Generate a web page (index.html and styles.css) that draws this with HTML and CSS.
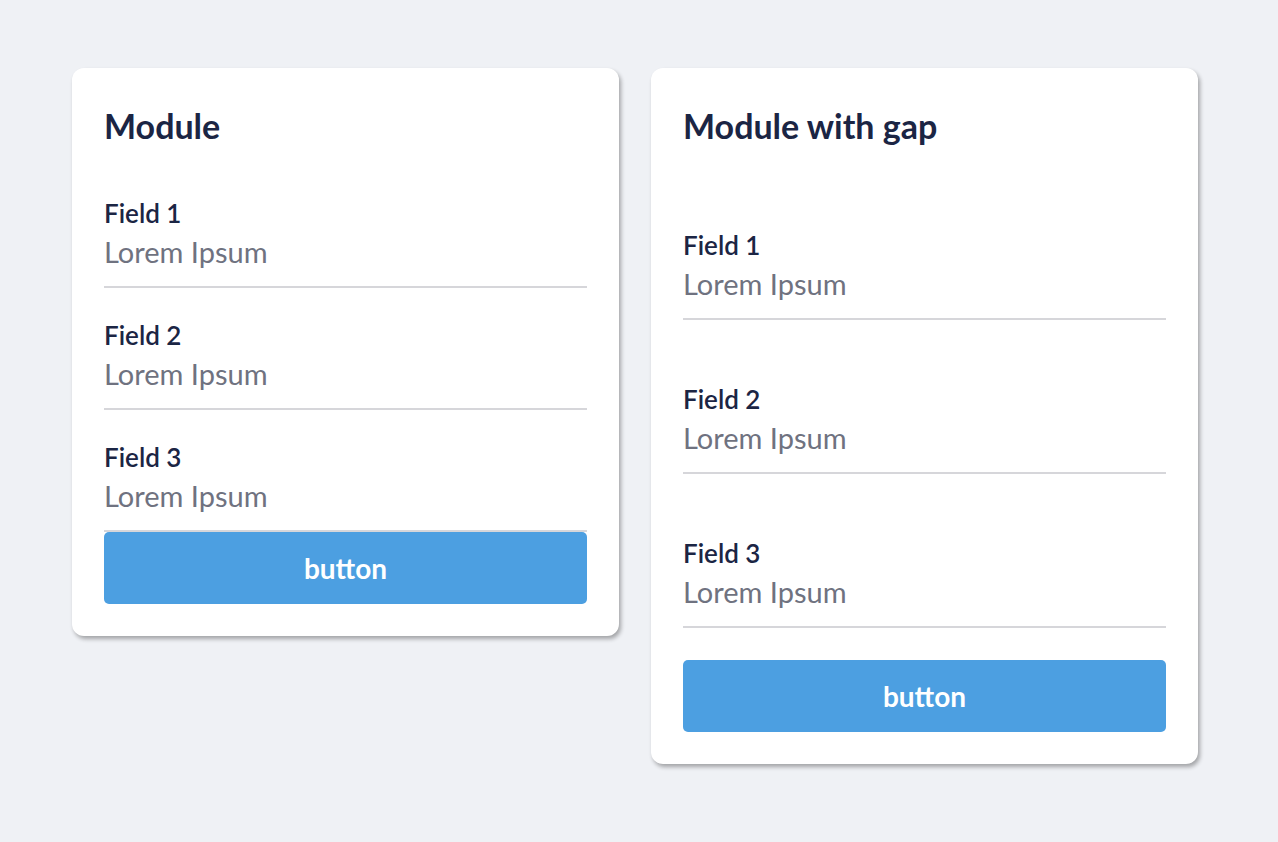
FILE: index.html
```html
<!DOCTYPE html>
<html lang="en">
<head>
<meta charset="utf-8">
<title>Modules</title>
<link rel="stylesheet" href="styles.css">
</head>
<body>
<main class="page">
  <section class="card">
    <h2 class="card-title">Module</h2>
    <div class="field">
      <div class="field-label">Field 1</div>
      <div class="field-value">Lorem Ipsum</div>
    </div>
    <div class="field">
      <div class="field-label">Field 2</div>
      <div class="field-value">Lorem Ipsum</div>
    </div>
    <div class="field">
      <div class="field-label">Field 3</div>
      <div class="field-value">Lorem Ipsum</div>
    </div>
    <button class="btn" type="button">button</button>
  </section>
  <section class="card card-gap">
    <h2 class="card-title">Module with gap</h2>
    <div class="field">
      <div class="field-label">Field 1</div>
      <div class="field-value">Lorem Ipsum</div>
    </div>
    <div class="field">
      <div class="field-label">Field 2</div>
      <div class="field-value">Lorem Ipsum</div>
    </div>
    <div class="field">
      <div class="field-label">Field 3</div>
      <div class="field-value">Lorem Ipsum</div>
    </div>
    <button class="btn" type="button">button</button>
  </section>
</main>
</body>
</html>
```
FILE: styles.css
```css
html, body {
  margin: 0;
  padding: 0;
  background: #eff1f5;
  font-family: "Lato", "Liberation Sans", sans-serif;
}

.page {
  display: flex;
  align-items: flex-start;
  gap: 32px;
  padding: 68px 0 0 72px;
  min-height: 842px;
  box-sizing: border-box;
}

.card {
  width: 547px;
  box-sizing: border-box;
  padding: 32px;
  background: #ffffff;
  border-radius: 12px;
  box-shadow: 2px 3px 4px rgba(0, 0, 0, 0.32);
  display: flex;
  flex-direction: column;
}

.card-gap {
  gap: 32px;
}

.card-title {
  margin: 0 0 15px;
  font-size: 34px;
  line-height: 51px;
  font-weight: 700;
  color: #1b2544;
}

.field {
  padding: 29px 0 16px;
  border-bottom: 2px solid #d6d6da;
}

.field-label {
  font-size: 26px;
  line-height: 36px;
  font-weight: 600;
  color: #1b2544;
}

.field-value {
  margin-top: 3px;
  font-size: 29px;
  line-height: 36px;
  font-weight: 400;
  color: #6f7280;
}

.btn {
  height: 72px;
  border: none;
  border-radius: 5px;
  background: #4c9fe1;
  color: #ffffff;
  font-family: inherit;
  font-size: 28px;
  font-weight: 700;
  cursor: pointer;
}
```
